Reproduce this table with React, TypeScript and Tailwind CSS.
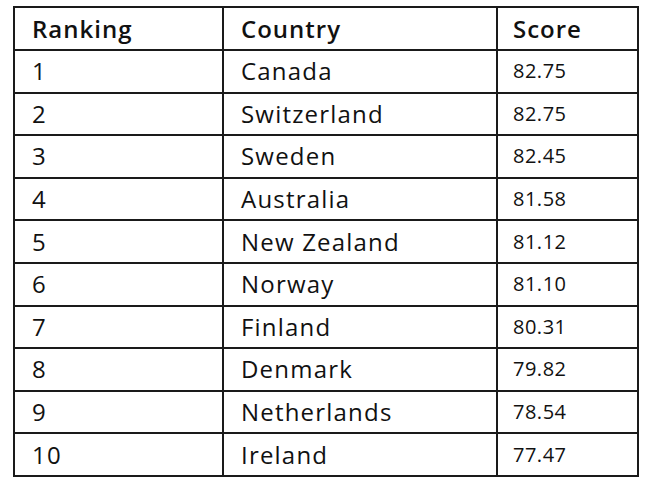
const rows: [number, string, string][] = [
  [1, "Canada", "82.75"],
  [2, "Switzerland", "82.75"],
  [3, "Sweden", "82.45"],
  [4, "Australia", "81.58"],
  [5, "New Zealand", "81.12"],
  [6, "Norway", "81.10"],
  [7, "Finland", "80.31"],
  [8, "Denmark", "79.82"],
  [9, "Netherlands", "78.54"],
  [10, "Ireland", "77.47"],
];

export default function App() {
  return (
    <div className="w-[650px] h-[492px] bg-white pt-[6px] pl-[13px] font-['Open_Sans',sans-serif] text-[#111]">
      <table className="border-collapse table-fixed w-[624px] border-2 border-[#1a1a1a]">
        <colgroup>
          <col className="w-[209px]" />
          <col className="w-[274px]" />
          <col className="w-[141px]" />
        </colgroup>
        <thead>
          <tr className="h-[43px]">
            <th className="border-2 border-[#1a1a1a] text-left font-semibold text-[24px] tracking-[1px] pl-[17px]">Ranking</th>
            <th className="border-2 border-[#1a1a1a] text-left font-semibold text-[24px] tracking-[1px] pl-[17px]">Country</th>
            <th className="border-2 border-[#1a1a1a] text-left font-semibold text-[24px] tracking-[1px] pl-[15px]">Score</th>
          </tr>
        </thead>
        <tbody>
          {rows.map(([rank, country, score]) => (
            <tr key={rank} className="h-[42.6px]">
              <td className="border-2 border-[#1a1a1a] text-[24px] tracking-[1.2px] pl-[17px]">{rank}</td>
              <td className="border-2 border-[#1a1a1a] text-[24px] tracking-[1.2px] pl-[17px]">{country}</td>
              <td className="border-2 border-[#1a1a1a] text-[20px] tracking-[0.5px] pl-[15px]">{score}</td>
            </tr>
          ))}
        </tbody>
      </table>
    </div>
  );
}
